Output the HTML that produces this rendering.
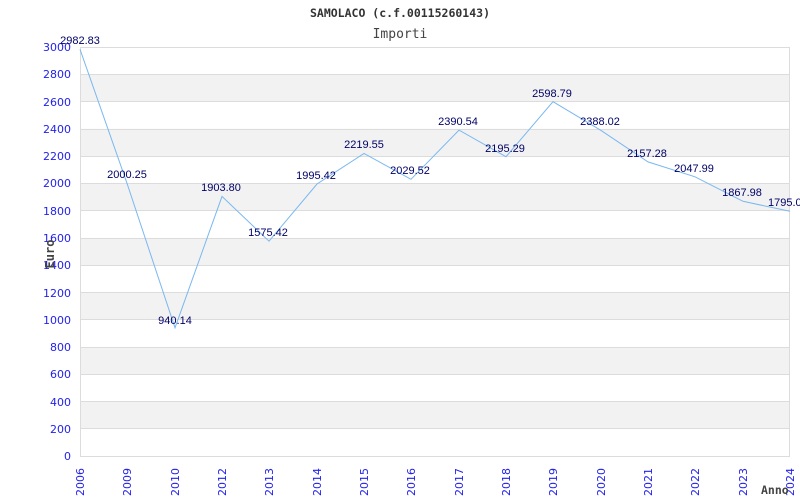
<!DOCTYPE html>
<html><head><meta charset="utf-8"><style>html,body{margin:0;padding:0;background:#fff}svg{display:block}</style></head><body>
<svg width="800" height="500" xmlns="http://www.w3.org/2000/svg">
<rect width="800" height="500" fill="#fff"/>
<g fill="#f2f2f2">
<rect x="80" y="74.3" width="710" height="27.3"/>
<rect x="80" y="128.8" width="710" height="27.3"/>
<rect x="80" y="183.3" width="710" height="27.3"/>
<rect x="80" y="237.9" width="710" height="27.3"/>
<rect x="80" y="292.4" width="710" height="27.3"/>
<rect x="80" y="347" width="710" height="27.3"/>
<rect x="80" y="401.5" width="710" height="27.3"/>
</g>
<g stroke="#dcdcdc" stroke-width="1">
<line x1="80" y1="47.5" x2="790" y2="47.5"/><line x1="80" y1="74.5" x2="790" y2="74.5"/><line x1="80" y1="101.5" x2="790" y2="101.5"/><line x1="80" y1="129.5" x2="790" y2="129.5"/><line x1="80" y1="156.5" x2="790" y2="156.5"/><line x1="80" y1="183.5" x2="790" y2="183.5"/><line x1="80" y1="210.5" x2="790" y2="210.5"/><line x1="80" y1="238.5" x2="790" y2="238.5"/><line x1="80" y1="265.5" x2="790" y2="265.5"/><line x1="80" y1="292.5" x2="790" y2="292.5"/><line x1="80" y1="319.5" x2="790" y2="319.5"/><line x1="80" y1="347.5" x2="790" y2="347.5"/><line x1="80" y1="374.5" x2="790" y2="374.5"/><line x1="80" y1="401.5" x2="790" y2="401.5"/><line x1="80" y1="428.5" x2="790" y2="428.5"/><line x1="80" y1="456.5" x2="790" y2="456.5"/>
<line x1="80.5" y1="47" x2="80.5" y2="457"/><line x1="789.5" y1="47" x2="789.5" y2="457"/>
</g>
<text x="400" y="17" text-anchor="middle" font-family="DejaVu Sans Mono, monospace" font-weight="bold" font-size="11.5" fill="#333">SAMOLACO (c.f.00115260143)</text>
<text x="400" y="38" text-anchor="middle" font-family="DejaVu Sans Mono, monospace" font-size="13" fill="#444">Importi</text>
<g font-family="DejaVu Sans, sans-serif" font-size="11" fill="#2222ee" text-anchor="end">
<text x="71" y="51">3000</text><text x="71" y="78">2800</text><text x="71" y="106">2600</text><text x="71" y="133">2400</text><text x="71" y="160">2200</text><text x="71" y="187">2000</text><text x="71" y="215">1800</text><text x="71" y="242">1600</text><text x="71" y="269">1400</text><text x="71" y="297">1200</text><text x="71" y="324">1000</text><text x="71" y="351">800</text><text x="71" y="378">600</text><text x="71" y="406">400</text><text x="71" y="433">200</text><text x="71" y="460">0</text>
</g>
<g font-family="DejaVu Sans, sans-serif" font-size="11" fill="#2222ee" text-anchor="end">
<text transform="translate(84,468) rotate(-90)">2006</text>
<text transform="translate(131,468) rotate(-90)">2009</text>
<text transform="translate(179,468) rotate(-90)">2010</text>
<text transform="translate(226,468) rotate(-90)">2012</text>
<text transform="translate(273,468) rotate(-90)">2013</text>
<text transform="translate(321,468) rotate(-90)">2014</text>
<text transform="translate(368,468) rotate(-90)">2015</text>
<text transform="translate(415,468) rotate(-90)">2016</text>
<text transform="translate(463,468) rotate(-90)">2017</text>
<text transform="translate(510,468) rotate(-90)">2018</text>
<text transform="translate(557,468) rotate(-90)">2019</text>
<text transform="translate(605,468) rotate(-90)">2020</text>
<text transform="translate(652,468) rotate(-90)">2021</text>
<text transform="translate(699,468) rotate(-90)">2022</text>
<text transform="translate(747,468) rotate(-90)">2023</text>
<text transform="translate(794,468) rotate(-90)">2024</text>
</g>
<text x="761" y="494" font-family="DejaVu Sans Mono, monospace" font-weight="bold" font-size="11.5" fill="#444">Anno</text>
<text transform="translate(54,254) rotate(-90)" text-anchor="middle" font-family="DejaVu Sans Mono, monospace" font-weight="bold" font-size="12" fill="#444">Euro</text>
<polyline fill="none" stroke="#7ab8f0" stroke-width="1" points="80,49.3 127,183.3 175,327.8 222,196.4 269,241.2 317,184 364,153.4 411,179.3 459,130.1 506,156.7 553,101.7 601,130.4 648,161.9 695,176.8 743,201.3 790,211.3"/>
<g font-family="Liberation Sans, sans-serif" font-size="11" fill="#000066" text-anchor="middle">
<text x="80" y="44">2982.83</text>
<text x="127" y="178">2000.25</text>
<text x="175" y="324">940.14</text>
<text x="221" y="191">1903.80</text>
<text x="268" y="236">1575.42</text>
<text x="316" y="179">1995.42</text>
<text x="364" y="148">2219.55</text>
<text x="410" y="174">2029.52</text>
<text x="458" y="125">2390.54</text>
<text x="505" y="152">2195.29</text>
<text x="552" y="97">2598.79</text>
<text x="600" y="125">2388.02</text>
<text x="647" y="157">2157.28</text>
<text x="694" y="172">2047.99</text>
<text x="742" y="196">1867.98</text>
<text x="768" y="206" text-anchor="start">1795.0</text>
</g>
</svg>
</body></html>
